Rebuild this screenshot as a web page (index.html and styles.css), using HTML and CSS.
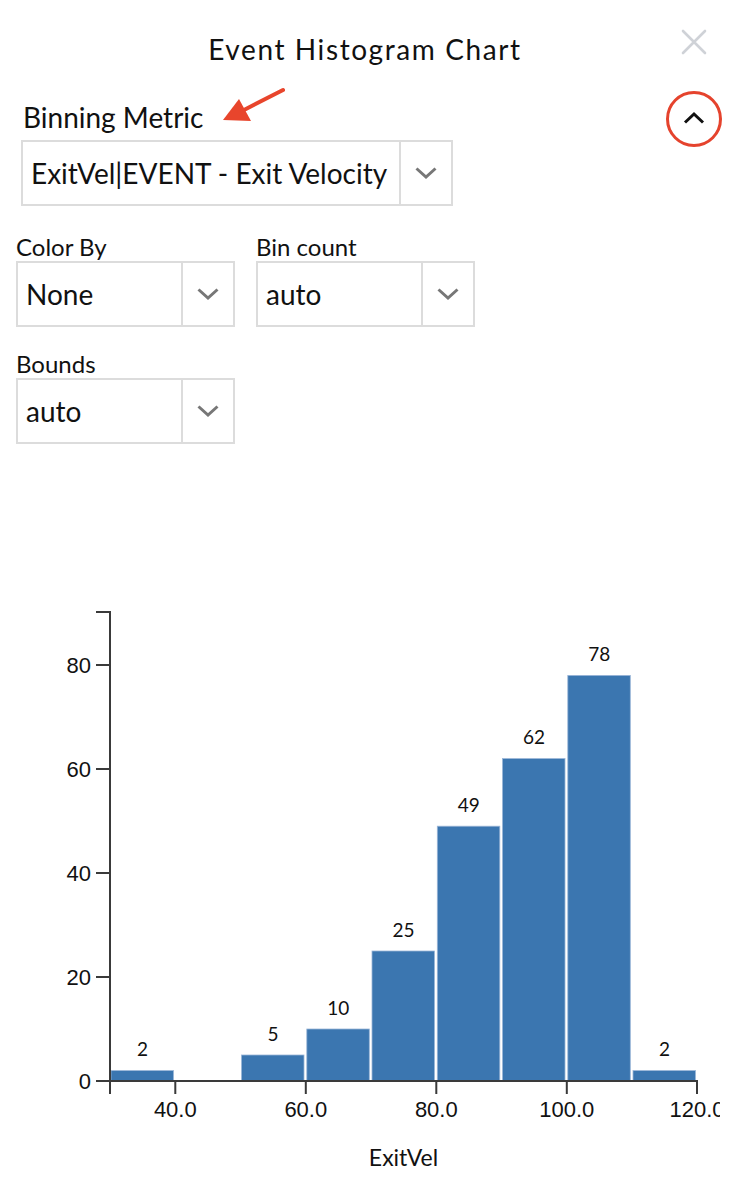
FILE: index.html
```html
<!DOCTYPE html>
<html lang="en">
<head>
<meta charset="utf-8">
<title>Event Histogram Chart</title>
<link rel="stylesheet" href="styles.css">
</head>
<body>
<div class="panel">
  <header class="header">
    <div class="header-side"></div>
    <h1 class="title">Event Histogram Chart</h1>
    <div class="header-side header-right">
      <button class="close" aria-label="Close">
        <svg width="26" height="26" viewBox="0 0 26 26"><path d="M2 2 L24 24 M24 2 L2 24" stroke="#cfd2d7" stroke-width="2.6" fill="none" stroke-linecap="round"/></svg>
      </button>
    </div>
  </header>

  <section class="metric-row">
    <div class="field">
      <label class="label label-lg">Binning Metric</label>
      <div class="select select-wide">
        <span class="value">ExitVel|EVENT - Exit Velocity</span>
        <span class="caret"><svg width="24" height="14" viewBox="0 0 24 14"><path d="M2.5 2.5 L12 11 L21.5 2.5" stroke="#777" stroke-width="3" fill="none"/></svg></span>
      </div>
    </div>
    <button class="collapse" aria-label="Collapse">
      <svg width="22" height="14" viewBox="0 0 22 14"><path d="M2 11.5 L11 3 L20 11.5" stroke="#111" stroke-width="3" fill="none"/></svg>
    </button>
    <svg class="annot-arrow" width="70" height="40" viewBox="0 0 70 40"><path d="M63 3 L24 23" stroke="#e8452c" stroke-width="4" stroke-linecap="round"/><polygon points="3,33 19,12 31,34" fill="#e8452c"/></svg>
  </section>

  <section class="options">
    <div class="field">
      <label class="label">Color By</label>
      <div class="select select-sm">
        <span class="value">None</span>
        <span class="caret"><svg width="24" height="14" viewBox="0 0 24 14"><path d="M2.5 2.5 L12 11 L21.5 2.5" stroke="#777" stroke-width="3" fill="none"/></svg></span>
      </div>
    </div>
    <div class="field">
      <label class="label">Bin count</label>
      <div class="select select-sm">
        <span class="value">auto</span>
        <span class="caret"><svg width="24" height="14" viewBox="0 0 24 14"><path d="M2.5 2.5 L12 11 L21.5 2.5" stroke="#777" stroke-width="3" fill="none"/></svg></span>
      </div>
    </div>
    <div class="field">
      <label class="label">Bounds</label>
      <div class="select select-sm">
        <span class="value">auto</span>
        <span class="caret"><svg width="24" height="14" viewBox="0 0 24 14"><path d="M2.5 2.5 L12 11 L21.5 2.5" stroke="#777" stroke-width="3" fill="none"/></svg></span>
      </div>
    </div>
  </section>

  <svg class="chart" width="720" height="622" viewBox="0 560 720 622">
    <g class="bars">
      <rect x="111" y="1070.6" width="62.5" height="10.4"/>
      <rect x="241.5" y="1055" width="62.5" height="26"/>
      <rect x="306.8" y="1029" width="62.5" height="52"/>
      <rect x="372" y="951" width="62.5" height="130"/>
      <rect x="437.3" y="826.2" width="62.5" height="254.8"/>
      <rect x="502.5" y="758.6" width="62.5" height="322.4"/>
      <rect x="567.8" y="675.4" width="62.5" height="405.6"/>
      <rect x="633" y="1070.6" width="62.5" height="10.4"/>
    </g>
    <g class="bar-labels">
      <text x="142.6" y="1056">2</text>
      <text x="273" y="1041">5</text>
      <text x="338.3" y="1015">10</text>
      <text x="403.5" y="937">25</text>
      <text x="468.8" y="812">49</text>
      <text x="534" y="744">62</text>
      <text x="599.3" y="661">78</text>
      <text x="664.5" y="1056">2</text>
    </g>
    <g class="axis">
      <path d="M96 612 H110 V1081 H96"/>
      <path d="M110 1094 V1081 H697 V1094"/>
      <path d="M96 665 H110 M96 769 H110 M96 873 H110 M96 977 H110"/>
      <path d="M175.3 1081 V1094 M305.8 1081 V1094 M436.3 1081 V1094 M566.8 1081 V1094"/>
    </g>
    <g class="ticks-y">
      <text x="91" y="673">80</text>
      <text x="91" y="777">60</text>
      <text x="91" y="881">40</text>
      <text x="91" y="985">20</text>
      <text x="91" y="1089">0</text>
    </g>
    <g class="ticks-x">
      <text x="175.3" y="1117">40.0</text>
      <text x="305.8" y="1117">60.0</text>
      <text x="436.3" y="1117">80.0</text>
      <text x="566.8" y="1117">100.0</text>
      <text x="697" y="1117">120.0</text>
    </g>
    <text class="axis-title" x="403.5" y="1166">ExitVel</text>
  </svg>
</div>
</body>
</html>
```

FILE: styles.css
```css
* { box-sizing: border-box; }
html, body { margin: 0; padding: 0; background: #fff; }
body {
  width: 730px;
  height: 1182px;
  overflow: hidden;
  font-family: Lato, "Noto Sans", "Liberation Sans", sans-serif;
  color: #111;
}
.panel { width: 730px; }

.header {
  display: grid;
  grid-template-columns: 1fr auto 1fr;
  align-items: start;
  padding-top: 32px;
  height: 88px;
}
.title {
  margin: 0;
  font-size: 28px;
  line-height: 34px;
  font-weight: 400;
  letter-spacing: 1.6px;
  color: #111;
}
.header-right { display: flex; justify-content: flex-end; padding-right: 23px; }
.close {
  border: 0;
  background: none;
  padding: 0;
  margin-top: -3px;
  width: 26px;
  height: 26px;
  display: block;
}
.close svg { display: block; }

.metric-row {
  position: relative;
  display: flex;
  justify-content: space-between;
  align-items: flex-start;
  padding-left: 21px;
  padding-right: 8px;
}
.field { display: flex; flex-direction: column; }
.label {
  font-size: 24px;
  line-height: 29px;
  color: #111;
}
.label-lg {
  font-size: 28px;
  line-height: 34px;
  padding-left: 2px;
  margin-top: 12px;
  margin-bottom: 6px;
}
.select {
  display: flex;
  align-items: stretch;
  height: 66px;
  border: 2px solid #dcdcdc;
  background: #fff;
}
.select-wide { width: 432px; }
.select-sm { width: 219px; }
.value {
  flex: 1;
  display: flex;
  align-items: center;
  padding-left: 8px;
  font-size: 28px;
  color: #111;
  white-space: nowrap;
}
.caret {
  width: 52px;
  border-left: 2px solid #dcdcdc;
  display: flex;
  align-items: center;
  justify-content: center;
}
.caret svg { display: block; }

.collapse {
  width: 56px;
  height: 56px;
  margin-top: 3px;
  border: 3.2px solid #e5432d;
  border-radius: 50%;
  background: #fff;
  padding: 0;
  display: flex;
  align-items: center;
  justify-content: center;
}
.collapse svg { display: block; margin-top: -2px; }

.annot-arrow {
  position: absolute;
  left: 220px;
  top: -1px;
}

.options {
  display: grid;
  grid-template-columns: 219px 219px;
  column-gap: 21px;
  row-gap: 22px;
  padding-left: 16px;
  margin-top: 26px;
}

.chart {
  display: block;
  margin-top: 116px;
}
.bars rect {
  fill: #3b76b0;
  stroke: #9ab6d8;
  stroke-width: 0.8;
}
.bar-labels text {
  font-family: Lato, "Noto Sans", sans-serif;
  font-size: 19px;
  text-anchor: middle;
  fill: #111;
}
.axis path {
  fill: none;
  stroke: #3a3a3a;
  stroke-width: 2;
}
.ticks-y text, .ticks-x text {
  font-family: "Liberation Sans", Arial, sans-serif;
  font-size: 22px;
  fill: #111;
}
.ticks-y text { text-anchor: end; }
.ticks-x text { text-anchor: middle; }
.axis-title {
  font-family: Lato, "Noto Sans", sans-serif;
  font-size: 23px;
  text-anchor: middle;
  fill: #111;
}
```
